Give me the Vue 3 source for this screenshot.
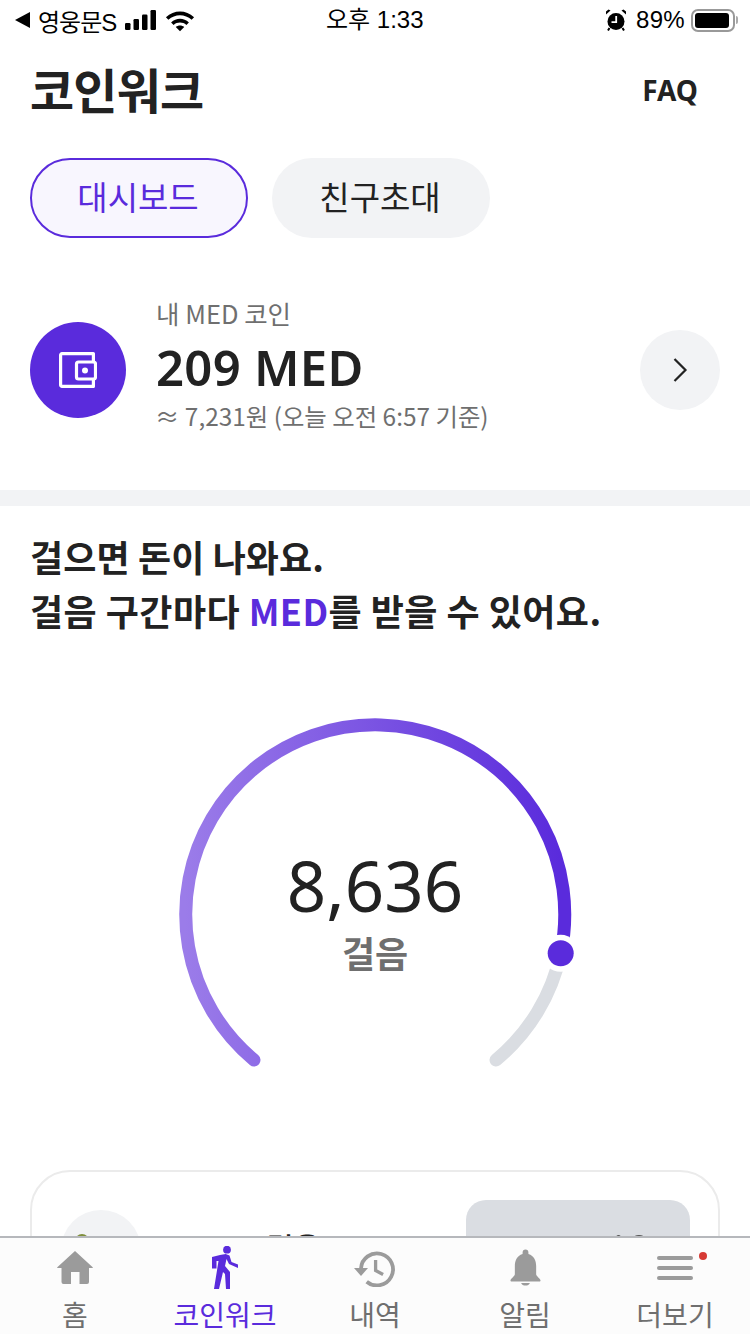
<script setup>
const tabs = [
  { label: '대시보드', active: true },
  { label: '친구초대', active: false },
]
const navs = [
  { label: '홈', icon: 'home' },
  { label: '코인워크', icon: 'walk', active: true },
  { label: '내역', icon: 'history' },
  { label: '알림', icon: 'bell' },
  { label: '더보기', icon: 'menu' },
]
</script>

<template>
  <div class="page">
    <div class="status">
      <div class="st-left">
        <span class="back"></span>
        <span class="carrier">영웅문S</span>
        <svg class="signal" width="34" height="22" viewBox="0 0 34 22">
          <rect x="1" y="14" width="5.500" height="7" rx="1.200" />
          <rect x="9.500" y="10" width="5.500" height="11" rx="1.200" />
          <rect x="18" y="5.500" width="5.500" height="15.500" rx="1.200" />
          <rect x="26.500" y="1" width="5.500" height="20" rx="1.200" />
        </svg>
        <svg class="wifi" width="30" height="23" viewBox="0 0 32 24">
          <path d="M1 8.500C9.500 .5 22.500 .5 31 8.500l-2.600 2.800C21.300 4.800 10.700 4.800 3.600 11.300z" />
          <path d="M6.500 14C12 9 20 9 25.500 14l-2.700 2.800c-3.800-3.400-9.800-3.400-13.600 0z" />
          <path d="M11.500 19c2.600-2.200 6.400-2.200 9 0L16 23.500z" />
        </svg>
      </div>
      <div class="st-time">오후 1:33</div>
      <div class="st-right">
        <svg class="alarm" width="20" height="22" viewBox="0 0 20 22">
          <circle cx="10" cy="12.500" r="8.500" />
          <path d="M0 5.500 4.500 1.500 2.500 .5 0 2.500zM20 5.500 15.500 1.500 17.500 .5 20 2.500z" />
          <path d="M3.500 19 2 21.500M16.500 19 18 21.500" class="foot" />
          <path class="hand" d="M10.200 7v6.200H5.500" />
        </svg>
        <span class="pct">89%</span>
        <div class="battery"><div class="fill"></div></div>
        <div class="nub"></div>
      </div>
    </div>

    <header class="head">
      <h1>코인워크</h1>
      <span class="faq">FAQ</span>
    </header>

    <div class="tabs">
      <div v-for="t in tabs" :key="t.label" class="tab" :class="{ on: t.active }">{{ t.label }}</div>
    </div>

    <section class="wallet">
      <div class="wallet-ic">
        <svg width="38" height="36" viewBox="0 0 38 36" fill="none" stroke="#fff" stroke-width="3.200" stroke-linejoin="round">
          <path d="M34.400 10V1.600H3a1.400 1.400 0 0 0-1.400 1.400v30a1.400 1.400 0 0 0 1.400 1.400H34.400V27" />
          <rect x="17.500" y="10" width="19" height="17" rx="2" />
          <circle cx="26" cy="18.500" r="3" fill="#fff" stroke="none" />
        </svg>
      </div>
      <div class="wallet-txt">
        <div class="w-lab">내 MED 코인</div>
        <div class="w-val">209 MED</div>
        <div class="w-sub">≈ 7,231원 (오늘 오전 6:57 기준)</div>
      </div>
      <div class="chev">
        <svg width="16" height="26" viewBox="0 0 16 26" fill="none" stroke="#222" stroke-width="2.200">
          <path d="M2.500 2 13.500 13 2.500 24" />
        </svg>
      </div>
    </section>

    <div class="divider"></div>

    <section class="intro">
      <p>걸으면 돈이 나와요.</p>
      <p>걸음 구간마다 <em>MED</em>를 받을 수 있어요.</p>
    </section>

    <section class="gauge">
      <svg width="420" height="370" viewBox="0 0 420 370" fill="none">
        <defs>
          <linearGradient id="arcg" gradientUnits="userSpaceOnUse" x1="20" y1="0" x2="395" y2="0">
            <stop offset="0" stop-color="#9b7ce9" />
            <stop offset="1" stop-color="#5a2bdc" />
          </linearGradient>
        </defs>
        <path d="M89 353A189.500 189.500 0 1 1 395.700 246.300" stroke="url(#arcg)" stroke-width="13" stroke-linecap="round" />
        <path d="M331 353A189.500 189.500 0 0 0 395.700 246.300" stroke="#dadde2" stroke-width="13" stroke-linecap="round" />
        <circle cx="395.700" cy="246.300" r="18.500" fill="#fff" />
        <circle cx="395.700" cy="246.300" r="13" fill="#5a2bdc" />
      </svg>
      <div class="count">
        <div class="num">8,636</div>
        <div class="unit">걸음</div>
      </div>
    </section>

    <section class="card">
      <div class="card-ic"><span></span></div>
      <div class="card-t">걸음</div>
      <div class="card-btn"><span></span><span></span></div>
    </section>

    <nav class="nav">
      <div v-for="n in navs" :key="n.label" class="nav-item" :class="{ on: n.active }">
        <div class="nav-ic">
          <svg v-if="n.icon === 'home'" width="36" height="33" viewBox="0 0 36 33">
            <path d="M18 0 35.700 16.300a.4.4 0 0 1-.3.7H32v14a2 2 0 0 1-2 2H22.500V21h-8.500V33H6.500a2 2 0 0 1-2-2V17H.6a.4.4 0 0 1-.3-.7z" fill="#9b9b9b" />
          </svg>
          <svg v-else-if="n.icon === 'walk'" width="26" height="43" viewBox="0 0 26 43">
            <circle cx="15" cy="3.700" r="3.900" fill="#5a2bdc" />
            <path d="M0 11 8 9 13.700 8 17.500 9.500 19.500 16 26 18.500V22L17 18 14.500 13 13 20 18 26V43H14L13 28 11 26 7 43H2L6.500 15 4.500 15V22.500H0z" fill="#5a2bdc" />
          </svg>
          <svg v-else-if="n.icon === 'history'" width="42" height="38" viewBox="0 0 42 38" fill="none">
            <path d="M7 19.500A16 16 0 1 1 12.700 32.700" stroke="#9b9b9b" stroke-width="3.800" />
            <path d="M0 19h14L7 27z" fill="#9b9b9b" />
            <path d="M21.600 11v10.500l7.500 4" stroke="#9b9b9b" stroke-width="3.300" />
          </svg>
          <svg v-else-if="n.icon === 'bell'" width="31" height="40" viewBox="0 0 32 40">
            <path d="M16 1a3 3 0 0 1 3 3v1.500C25 7.500 27 12.500 27 18v8.500c0 2 4.500 4.500 4.500 6.500 0 .8-.5 1-1 1H1.500c-.5 0-1-.2-1-1 0-2 4.500-4.500 4.500-6.500V18C5 12.500 7 7.500 13 5.500V4a3 3 0 0 1 3-3z" fill="#9b9b9b" />
            <path d="M11.500 35.500h9c-.8 3.500-8.200 3.500-9 0z" fill="#9b9b9b" />
          </svg>
          <div v-else class="menu">
            <span></span><span></span><span></span>
            <i></i>
          </div>
        </div>
        <div class="nav-lab">{{ n.label }}</div>
      </div>
    </nav>
  </div>
</template>

<style>
html, body { margin: 0; padding: 0; background: #fff; }
</style>

<style scoped>
* { box-sizing: border-box; }
.page {
  position: relative;
  width: 750px;
  height: 1334px;
  overflow: hidden;
  background: #fff;
  font-family: "Noto Sans CJK KR", "Noto Sans", sans-serif;
  color: #222;
}
.status {
  height: 40px;
  display: flex;
  align-items: center;
  justify-content: space-between;
  position: relative;
  color: #000;
  font-family: "Liberation Sans", "Noto Sans CJK KR", sans-serif;
  font-size: 24px;
}
.st-left { display: flex; align-items: center; padding-left: 15px; }
.back {
  width: 0; height: 0;
  border-top: 8px solid transparent;
  border-bottom: 8px solid transparent;
  border-right: 15px solid #000;
  margin-right: 8px;
}
.carrier { margin-right: 8px; letter-spacing: -1px; }
.signal { fill: #000; margin-right: 7px; }
.wifi { fill: #000; }
.st-time {
  position: absolute;
  left: 326px;
  top: 0;
  line-height: 40px;
}
.st-right { display: flex; align-items: center; padding-right: 12px; }
.alarm { fill: #000; margin-right: 10px; }
.foot { fill: none; stroke: #000; stroke-width: 2; }
.hand { fill: none; stroke: #fff; stroke-width: 1.800; }
.pct { margin-right: 6px; letter-spacing: 0.3px; }
.battery {
  width: 44px; height: 23px;
  border: 2px solid #999;
  border-radius: 7px;
  padding: 2px;
}
.fill { width: 34px; height: 15px; background: #000; border-radius: 3px; }
.nub { width: 2px; height: 8px; background: #aaa; border-radius: 0 2px 2px 0; margin-left: 1px; }

.head {
  height: 100px;
  padding: 0 52px 4px 30px;
  display: flex;
  align-items: center;
  justify-content: space-between;
}
h1 { margin: 0; font-size: 48px; font-weight: 700; line-height: 96px; color: #222; letter-spacing: -0.800px; }
.faq { font-size: 28px; font-weight: 700; font-family: "Noto Sans", sans-serif; position: relative; top: 2px; }

.tabs { display: flex; gap: 24px; padding: 18px 30px 0; }
.tab {
  width: 218px;
  height: 80px;
  border-radius: 40px;
  background: #f2f3f5;
  display: flex;
  align-items: center;
  justify-content: center;
  padding: 0 2px 5px 0;
  font-size: 33px;
  color: #222;
}
.tab.on { background: #f8f6fe; border: 2px solid #5a2bdc; color: #5a2bdc; }

.wallet {
  display: flex;
  align-items: center;
  height: 252px;
  padding: 12px 30px 0;
}
.wallet-ic {
  width: 96px; height: 96px;
  border-radius: 50%;
  background: #5a2bdc;
  display: flex;
  align-items: center;
  justify-content: center;
  flex: none;
}
.wallet-txt { margin-left: 30px; flex: 1; margin-top: -10px; }
.w-lab { font-size: 25.500px; line-height: 34px; color: #6f6f6f; }
.w-val { font-family: "Noto Sans", sans-serif; font-size: 49px; font-weight: 600; line-height: 62px; padding-top: 6px; color: #222; letter-spacing: 0.300px; }
.w-sub { font-size: 24.400px; line-height: 36px; color: #6f6f6f; margin-left: -1px; }
.chev {
  width: 80px; height: 80px;
  border-radius: 50%;
  background: #f2f3f5;
  display: flex;
  align-items: center;
  justify-content: center;
  flex: none;
}
.divider { height: 16px; background: #f2f3f5; }

.intro { padding: 23px 30px 0; }
.intro p { margin: 0; font-size: 36px; font-weight: 700; line-height: 54px; color: #222; letter-spacing: 0.450px; }
.intro p:first-child { letter-spacing: 0.100px; }
.intro em { font-style: normal; color: #5a2bdc; }

.gauge {
  position: relative;
  width: 420px;
  height: 370px;
  margin: 70px auto 0;
}
.gauge svg { display: block; }
.count {
  position: absolute;
  left: 0; right: 0;
  top: 136px;
  text-align: center;
}
.num { font-family: "Noto Sans", sans-serif; font-size: 69px; line-height: 84px; color: #222; }
.unit { font-size: 36px; font-weight: 700; line-height: 50px; color: #6f6f6f; }

.card {
  position: absolute;
  left: 30px;
  top: 1170px;
  width: 690px;
  height: 200px;
  border: 2px solid #ebebeb;
  border-radius: 40px;
  background: #fff;
}
.card-ic {
  position: absolute;
  left: 29px; top: 38px;
  width: 80px; height: 80px;
  border-radius: 50%;
  background: #f2f3f5;
}
.card-ic span {
  position: absolute;
  left: 14px; top: 24px;
  width: 14px; height: 14px;
  border-radius: 50%;
  background: #7f8f3c;
}
.card-t {
  position: absolute;
  left: 234px; top: 54px;
  font-size: 30px;
  font-weight: 500;
  line-height: 40px;
}
.card-btn {
  position: absolute;
  left: 434px; top: 28px;
  width: 224px; height: 100px;
  border-radius: 20px;
  background: #dadde2;
}
.card-btn span {
  position: absolute;
  top: 35px;
  width: 5px; height: 5px;
  border-radius: 50%;
  background: #555;
}
.card-btn span:first-child { left: 150px; }
.card-btn span:last-child { left: 168px; width: 10px; }

.nav {
  position: absolute;
  left: 0; right: 0; bottom: 0;
  height: 98px;
  background: #fcfcfc;
  border-top: 2px solid #b6b8bc;
  display: flex;
}
.nav-item {
  flex: 1;
  display: flex;
  flex-direction: column;
  align-items: center;
  color: #6f6f6f;
}
.nav-ic {
  height: 57px;
  display: flex;
  align-items: center;
  justify-content: center;
  padding-top: 2px;
}
.nav-lab { font-size: 28px; line-height: 38px; color: #6f6f6f; white-space: nowrap; }
.nav-item.on .nav-lab { color: #5a2bdc; }
.menu { position: relative; width: 36px; display: flex; flex-direction: column; gap: 6px; }
.menu span { display: block; height: 4px; border-radius: 2px; background: #9b9b9b; }
.menu i {
  position: absolute;
  right: -14px; top: -4px;
  width: 8px; height: 8px;
  border-radius: 50%;
  background: #d63a34;
}
</style>
